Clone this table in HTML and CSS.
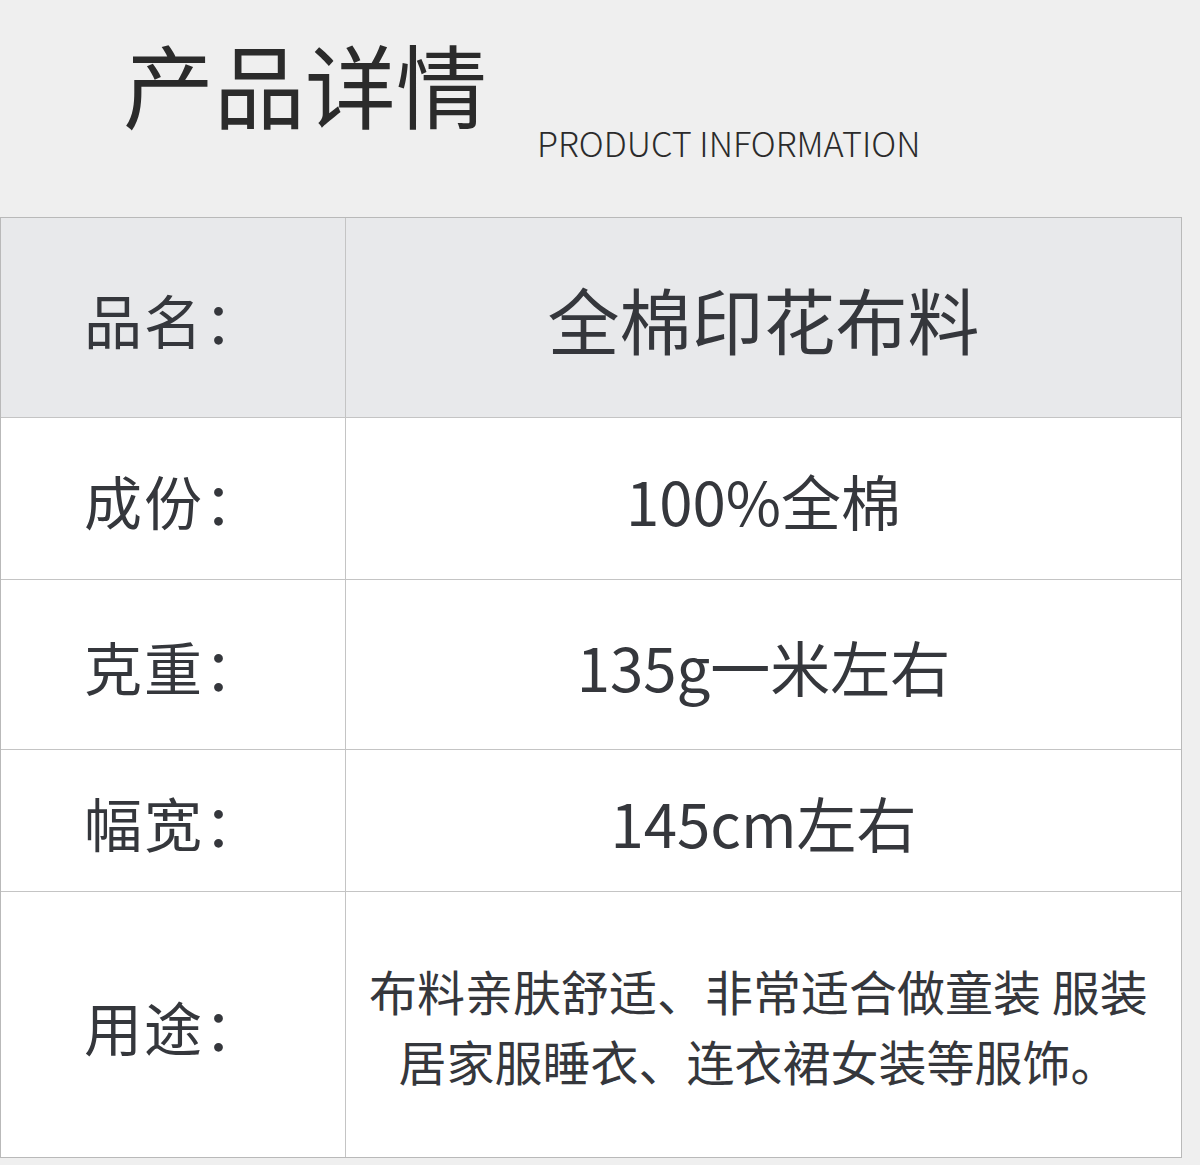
FILE: index.html
```html
<!DOCTYPE html>
<html lang="zh-CN">
<head>
<meta charset="utf-8">
<link rel="stylesheet" href="styles.css">
</head>
<body>
<div class="page">
  <header class="head">
    <h1 class="title">产品详情</h1>
    <div class="subtitle">PRODUCT INFORMATION</div>
  </header>
  <div class="table">
    <div class="row row-head">
      <div class="label">品名：</div>
      <div class="value value-big">全棉印花布料</div>
    </div>
    <div class="row r2">
      <div class="label">成份：</div>
      <div class="value">100%全棉</div>
    </div>
    <div class="row r3">
      <div class="label">克重：</div>
      <div class="value">135g一米左右</div>
    </div>
    <div class="row r4">
      <div class="label">幅宽：</div>
      <div class="value">145cm左右</div>
    </div>
    <div class="row r5">
      <div class="label">用途：</div>
      <div class="value value-text">布料亲肤舒适、非常适合做童装 服装<br>居家服睡衣、连衣裙女装等服饰。</div>
    </div>
  </div>
</div>
</body>
</html>
```

FILE: styles.css
```css
* { box-sizing: border-box; margin: 0; padding: 0; }
html, body { background: #efefef; }
body {
  font-family: "Noto Sans CJK SC", "Noto Sans", sans-serif;
  color: #35373c;
  width: 1200px;
  height: 1165px;
  overflow: hidden;
}
.page { width: 1200px; }
.head {
  height: 217px;
  display: flex;
  align-items: flex-start;
  padding-left: 123px;
}
.title {
  font-size: 91px;
  font-weight: 400;
  line-height: 1;
  color: #2b2b2b;
  margin-top: 37px;
  letter-spacing: 0;
}
.subtitle {
  font-size: 34.3px;
  font-weight: 300;
  line-height: 1;
  color: #2b2b2b;
  margin-top: 125px;
  margin-left: 50px;
}
.table {
  width: 1182px;
  border: 1px solid #b9b9b9;
  background: #fff;
}
.row {
  display: grid;
  grid-template-columns: 345px 1fr;
  border-top: 1px solid #c4c4c4;
}
.row:first-child { border-top: none; }
.row-head { height: 199px; background: #e8e9eb; }
.r2 { height: 162px; }
.r3 { height: 170px; }
.r4 { height: 142px; }
.r5 { height: 266px; }
.label {
  display: flex;
  align-items: center;
  padding-left: 83px;
  font-size: 58px;
  letter-spacing: 2px;
  border-right: 1px solid #c4c4c4;
  padding-top: 2px;
}
.value {
  display: flex;
  align-items: center;
  justify-content: center;
  font-size: 60px;
  padding-top: 2px;
}
.value-big { font-size: 72px; padding-top: 0; }
.value-text {
  font-size: 48px;
  line-height: 70px;
  text-align: center;
  padding-top: 0;
  padding-right: 10px;
}
```
